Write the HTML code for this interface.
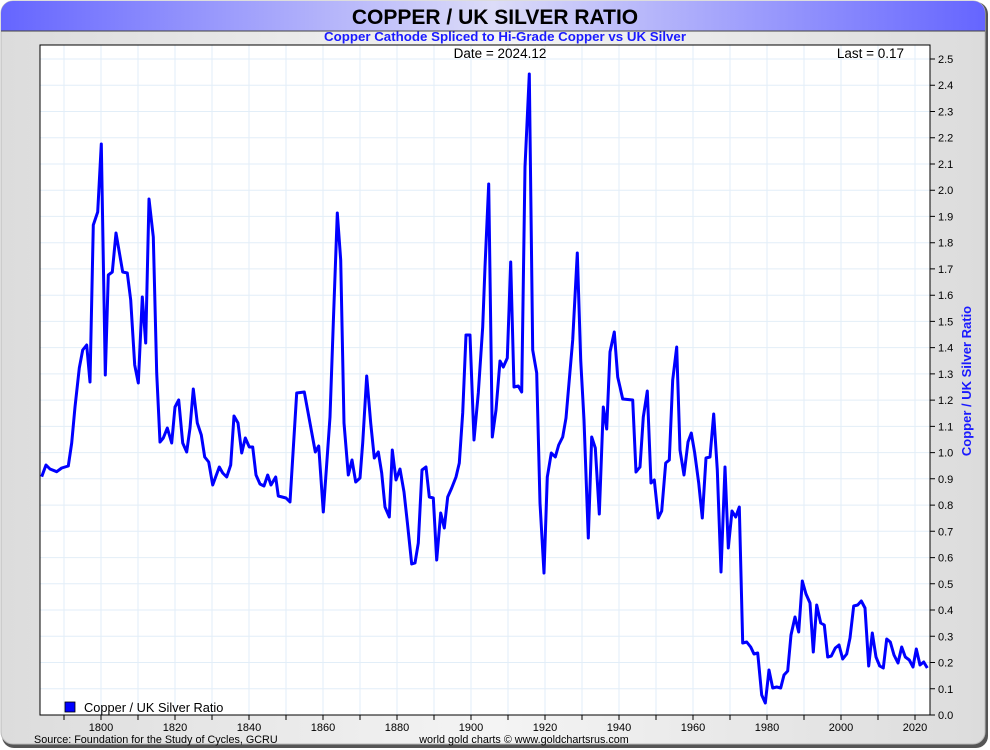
<!DOCTYPE html>
<html><head><meta charset="utf-8"><style>
html,body{margin:0;padding:0;background:#fff;}
svg{display:block;font-family:"Liberation Sans",sans-serif;}
</style></head><body>
<svg width="990" height="750" viewBox="0 0 990 750" xmlns="http://www.w3.org/2000/svg">
<defs>
<linearGradient id="hdr" x1="0" x2="1" y1="0" y2="0">
<stop offset="0" stop-color="#6565ff"/><stop offset="0.5" stop-color="#dcdcf8"/><stop offset="1" stop-color="#6565ff"/>
</linearGradient>
<linearGradient id="bod" x1="0" x2="1" y1="0" y2="0">
<stop offset="0" stop-color="#dcdcdc"/><stop offset="0.5" stop-color="#f4f4f4"/><stop offset="1" stop-color="#dcdcdc"/>
</linearGradient>
</defs>
<rect x="0" y="0" width="990" height="750" fill="#fff"/>
<rect x="2" y="2" width="986" height="746" rx="12" fill="#555"/>
<rect x="1" y="1" width="984" height="743" rx="12" fill="url(#bod)" stroke="#bbb"/>
<path d="M13 1 H973 A12 12 0 0 1 985 13 V31 H1 V13 A12 12 0 0 1 13 1Z" fill="url(#hdr)"/>
<line x1="1" y1="31" x2="985" y2="31" stroke="#444" stroke-width="1"/>
<text x="495" y="24" text-anchor="middle" font-size="21" font-weight="bold" fill="#000">COPPER / UK SILVER RATIO</text>
<text x="505" y="41" text-anchor="middle" font-size="13.3" font-weight="bold" fill="#1a1aff">Copper Cathode Spliced to Hi-Grade Copper vs UK Silver</text>
<rect x="40" y="45" width="890" height="670" fill="#fff"/>
<g stroke="#e2eef8" stroke-width="1">
<path d="M64 45V715M101 45V715M138 45V715M175 45V715M212 45V715M249 45V715M286 45V715M323 45V715M360 45V715M397 45V715M434 45V715M471 45V715M508 45V715M545 45V715M582 45V715M619 45V715M656 45V715M693 45V715M730 45V715M767 45V715M804 45V715M841 45V715M878 45V715M915 45V715"/>
<path d="M40 688.8H930M40 662.5H930M40 636.3H930M40 610H930M40 583.8H930M40 557.6H930M40 531.3H930M40 505.1H930M40 478.8H930M40 452.6H930M40 426.4H930M40 400.1H930M40 373.9H930M40 347.6H930M40 321.4H930M40 295.2H930M40 268.9H930M40 242.7H930M40 216.4H930M40 190.2H930M40 164H930M40 137.7H930M40 111.5H930M40 85.2H930M40 59H930"/>
</g>
<text x="500" y="58" text-anchor="middle" font-size="13.5" fill="#000">Date = 2024.12</text>
<text x="904" y="58" text-anchor="end" font-size="13.5" fill="#000">Last = 0.17</text>
<polyline fill="none" stroke="#0000ff" stroke-width="3" stroke-linejoin="round" points="41.7,476.7 46,465 50,469 56.7,471.7 61.7,468 68.3,466 71.7,443 75,407 79.3,368 82.7,350 86.7,345 90,382 93.3,225 97.7,212 101.3,144 105.3,375 108.3,275 112.3,272 116,233 122.7,272 127.3,273 130.7,300 134.7,365 138.3,383 142.3,297 145.7,343 149,199 153.3,237 156.7,373 160,442 163.3,438 167.3,428 171.7,443 175,407 178.7,400 182.7,443 186.7,452 190,428 193.3,389 197.3,423 201.3,435 204.7,457 208.7,462 212.7,485 219.3,467 222.7,473 226.7,477 230.7,465 234,416 238,423 241.7,453 245.3,438 249.3,447 252.7,447 256,475 260,484 264,486 267.7,475 271,485 275.7,477 278.3,496 286,498 290,502 296.7,393 304.3,392 315.3,452 318.7,446 323.3,512 327.7,450 330,417 333.3,323 337.3,213 340.7,260 344,423 348.3,475 352,460 355.7,482 360,478 362.7,443 366.7,376 370.7,423 374.3,458 378.3,452 381.7,473 385,507 389.3,517 392.3,450 396,480 400,469 404,492 407.3,522 411.7,564 415,563 418.3,543 422,470 426,467 429.3,497 433.3,498 436.7,560 440.7,513 444.3,528 447.7,497 451.7,488 456,477 459.3,463 462.7,413 466,335 470,335 474,440 478.3,393 482.7,327 485,267 488.7,184 492.3,437 496,410 500,361 503.3,367 507.3,358 510.7,262 514,387 518.3,386 521.7,392 525,167 529.3,74 532.7,350 536.7,373 540,503 544,573 547.3,477 551.3,453 555.3,457 558.7,445 562.7,437 566,418 572.7,340 577.3,253 580.7,360 584,420 588.3,538 591.7,437 595.3,448 599.3,514 603.3,407 606.7,429 610,352 614.3,332 617.7,377 620,387 622.7,399 632.7,400 636,472 640,467 643.3,417 647.3,391 651,483 654.3,480 658.3,518 661.7,511 665.7,463 669.3,460 672.7,380 676.7,347 680,450 684,475 688,442 691.3,433 694.7,453 698.7,483 702.3,518 706,458 710,457 713.7,414 717.3,470 721,572 725,467 728.3,548 732,511 735.7,517 739.3,507 742.7,643 746.7,642 750.7,647 754,654 757.7,653 761.7,695 765.3,703 769,670 772.7,688 776.7,687 780.7,688 784,675 787.7,671 791,635 795,617 798.7,632 802.3,581 806,594 810,603 813.3,652 816.7,605 820.7,623 824.3,625 827.7,657 831.3,656 835.3,648 839,645 842.7,659 846.7,654 850,638 853.7,606 857.7,605 861.3,601 865,608 868.7,666 872.3,633 876,657 879.7,666 883.3,668 886.7,639 890.3,642 894,655 898,663 901.7,647 905.3,657 909.3,660 913,667 916.3,649 920,665 923.7,662 927.3,668"/>
<rect x="40" y="45" width="890" height="670" fill="none" stroke="#000" stroke-width="1"/>
<rect x="65" y="702" width="10" height="10" fill="#0000ff" stroke="#000" stroke-width="0.8"/>
<text x="84" y="712" font-size="12.8" fill="#000">Copper / UK Silver Ratio</text>
<g stroke="#000" stroke-width="1">
<path d="M64 715V720M101 715V720M138 715V720M175 715V720M212 715V720M249 715V720M286 715V720M323 715V720M360 715V720M397 715V720M434 715V720M471 715V720M508 715V720M545 715V720M582 715V720M619 715V720M656 715V720M693 715V720M730 715V720M767 715V720M804 715V720M841 715V720M878 715V720M915 715V720"/>
<path d="M930 715H935M930 688.8H935M930 662.5H935M930 636.3H935M930 610H935M930 583.8H935M930 557.6H935M930 531.3H935M930 505.1H935M930 478.8H935M930 452.6H935M930 426.4H935M930 400.1H935M930 373.9H935M930 347.6H935M930 321.4H935M930 295.2H935M930 268.9H935M930 242.7H935M930 216.4H935M930 190.2H935M930 164H935M930 137.7H935M930 111.5H935M930 85.2H935M930 59H935"/>
</g>
<g font-size="11" fill="#000" text-anchor="middle">
<text x="101" y="731">1800</text><text x="175" y="731">1820</text><text x="249" y="731">1840</text><text x="323" y="731">1860</text><text x="397" y="731">1880</text><text x="471" y="731">1900</text><text x="545" y="731">1920</text><text x="619" y="731">1940</text><text x="693" y="731">1960</text><text x="767" y="731">1980</text><text x="841" y="731">2000</text><text x="915" y="731">2020</text>
</g>
<g font-size="11" fill="#000">
<text x="938" y="719">0.0</text><text x="938" y="692.8">0.1</text><text x="938" y="666.5">0.2</text><text x="938" y="640.3">0.3</text><text x="938" y="614">0.4</text><text x="938" y="587.8">0.5</text><text x="938" y="561.6">0.6</text><text x="938" y="535.3">0.7</text><text x="938" y="509.1">0.8</text><text x="938" y="482.8">0.9</text><text x="938" y="456.6">1.0</text><text x="938" y="430.4">1.1</text><text x="938" y="404.1">1.2</text><text x="938" y="377.9">1.3</text><text x="938" y="351.6">1.4</text><text x="938" y="325.4">1.5</text><text x="938" y="299.2">1.6</text><text x="938" y="272.9">1.7</text><text x="938" y="246.7">1.8</text><text x="938" y="220.4">1.9</text><text x="938" y="194.2">2.0</text><text x="938" y="168">2.1</text><text x="938" y="141.7">2.2</text><text x="938" y="115.5">2.3</text><text x="938" y="89.2">2.4</text><text x="938" y="63">2.5</text>
</g>
<text transform="translate(971,381) rotate(-90)" text-anchor="middle" font-size="13" font-weight="bold" fill="#1a1aff">Copper / UK Silver Ratio</text>
<text x="34" y="743" font-size="10.8" fill="#000">Source: Foundation for the Study of Cycles, GCRU</text>
<text x="524" y="743" text-anchor="middle" font-size="10.8" fill="#000">world gold charts © www.goldchartsrus.com</text>
</svg>
</body></html>
